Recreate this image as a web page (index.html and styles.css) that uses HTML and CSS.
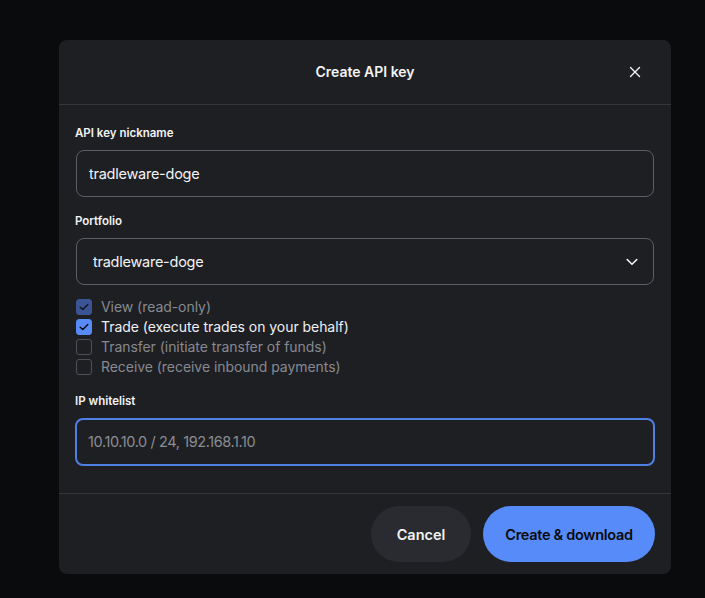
FILE: index.html
```html
<!DOCTYPE html>
<html lang="en">
<head>
<meta charset="utf-8">
<title>Create API key</title>
<link rel="stylesheet" href="styles.css">
</head>
<body>
<div class="page">
  <div class="modal">
    <div class="modal-header">
      <span></span>
      <h2 class="modal-title">Create API key</h2>
      <button class="close-btn" aria-label="Close">
        <svg width="12" height="12" viewBox="0 0 12 12"><path d="M1.5 1.5L10.5 10.5M10.5 1.5L1.5 10.5" stroke="#f2f3f5" stroke-width="1.4" stroke-linecap="round"/></svg>
      </button>
    </div>
    <div class="modal-body">
      <div class="group">
        <label class="label">API key nickname</label>
        <div class="field"><span class="field-text">tradleware-doge</span></div>
      </div>
      <div class="group">
        <label class="label">Portfolio</label>
        <div class="field select"><span class="field-text">tradleware-doge</span>
          <svg class="chevron" width="12" height="8" viewBox="0 0 12 8"><path d="M1.2 1.5L6 6.3L10.8 1.5" fill="none" stroke="#f2f3f5" stroke-width="1.6" stroke-linecap="round" stroke-linejoin="round"/></svg>
        </div>
      </div>
      <ul class="checks">
        <li class="check disabled">
          <span class="box checked dim"><svg width="10" height="8" viewBox="0 0 10 8"><path d="M1.2 4.2L3.8 6.6L8.8 1.4" fill="none" stroke="#14161b" stroke-width="1.4" stroke-linecap="round" stroke-linejoin="round"/></svg></span>
          <span>View (read-only)</span>
        </li>
        <li class="check">
          <span class="box checked"><svg width="10" height="8" viewBox="0 0 10 8"><path d="M1.2 4.2L3.8 6.6L8.8 1.4" fill="none" stroke="#0a0b0d" stroke-width="1.4" stroke-linecap="round" stroke-linejoin="round"/></svg></span>
          <span>Trade (execute trades on your behalf)</span>
        </li>
        <li class="check disabled">
          <span class="box"></span>
          <span>Transfer (initiate transfer of funds)</span>
        </li>
        <li class="check disabled">
          <span class="box"></span>
          <span>Receive (receive inbound payments)</span>
        </li>
      </ul>
      <div class="group">
        <label class="label">IP whitelist</label>
        <div class="field focus"><span class="field-text placeholder">10.10.10.0 / 24, 192.168.1.10</span></div>
      </div>
    </div>
    <div class="modal-footer">
      <button class="btn btn-secondary">Cancel</button>
      <button class="btn btn-primary">Create &amp; download</button>
    </div>
  </div>
</div>
</body>
</html>
```
FILE: styles.css
```css
* { box-sizing: border-box; }
html, body {
  margin: 0;
  padding: 0;
  background: #0a0b0d;
  font-family: Inter, "Noto Sans", "Liberation Sans", sans-serif;
  color: #f2f3f5;
}
.page {
  padding: 40px 0 0 59px;
}
.modal {
  width: 612px;
  background: #1e1f23;
  border-radius: 8px;
  overflow: hidden;
}
.modal-header {
  height: 65px;
  border-bottom: 1px solid #35363b;
  display: grid;
  grid-template-columns: 1fr auto 1fr;
  align-items: center;
}
.modal-title {
  margin: 0;
  font-size: 14px;
  font-weight: 600;
  line-height: 20px;
  color: #f2f3f5;
  padding-bottom: 1px;
}
.close-btn {
  justify-self: end;
  margin-right: 28px;
  width: 16px;
  height: 16px;
  padding: 0;
  border: 0;
  background: none;
  display: flex;
  align-items: center;
  justify-content: center;
}
.modal-body {
  padding: 20px 16px 27px;
}
.group + .group, .checks + .group { margin-top: 16px; }
.label {
  display: block;
  font-size: 11.5px;
  font-weight: 600;
  line-height: 16px;
  color: #f2f3f5;
  margin-bottom: 9px;
}
.field {
  height: 47px;
  margin: 0 1px 2px;
  border: 1px solid #5b5e64;
  border-radius: 8px;
  display: flex;
  align-items: center;
  padding: 0 12px;
}
.field.select {
  padding: 0 15px 0 16px;
  justify-content: space-between;
}
.field.focus {
  height: 48px;
  margin: 0;
  border: 2px solid #4f7fe3;
  padding: 0 11px;
}
.field-text {
  font-size: 14.5px;
  line-height: 20px;
  letter-spacing: -0.25px;
  color: #f2f3f5;
}
.placeholder { color: #8a8d94; letter-spacing: -0.4px; }
.chevron { display: block; margin-top: 1px; }
.checks {
  list-style: none;
  margin: 12px 0 0;
  padding: 0;
}
.check {
  height: 20px;
  display: flex;
  align-items: center;
  gap: 9px;
  font-size: 14px;
  line-height: 20px;
  letter-spacing: -0.05px;
  color: #eef0f3;
  padding-left: 1px;
}
.check.disabled { color: #868990; }
.box {
  width: 16px;
  height: 16px;
  border-radius: 3px;
  border: 1px solid #4d5057;
  display: flex;
  align-items: center;
  justify-content: center;
  flex: none;
}
.box.checked {
  background: #578bfa;
  border-color: #578bfa;
}
.box.checked.dim {
  background: #3a5496;
  border-color: #3a5496;
}
.modal-footer {
  border-top: 1px solid #35363b;
  padding: 12px 16px 12px;
  display: flex;
  justify-content: flex-end;
  gap: 12px;
}
.btn {
  height: 56px;
  border-radius: 28px;
  border: 0;
  font-family: inherit;
  font-size: 14.5px;
  font-weight: 600;
  padding: 0;
  white-space: nowrap;
}
.btn-secondary {
  background: #2a2b30;
  color: #f2f3f5;
  width: 100px;
}
.btn-primary {
  background: #578bfa;
  color: #0a0b0d;
  width: 172px;
  letter-spacing: -0.3px;
}
```
